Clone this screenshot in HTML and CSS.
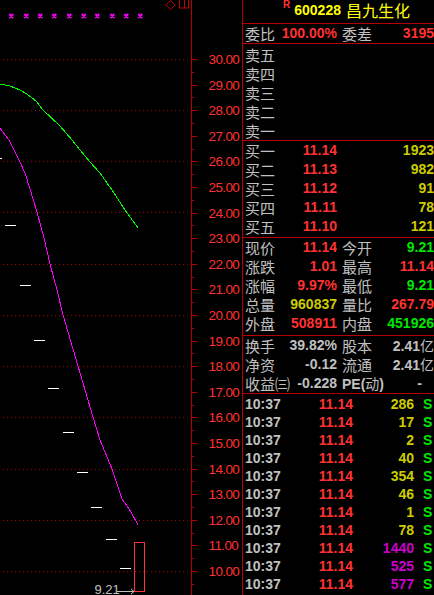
FILE: index.html
```html
<!DOCTYPE html>
<html lang="zh-CN">
<head>
<meta charset="utf-8">
<title>600228 昌九生化</title>
<link rel="stylesheet" href="styles.css">
</head>
<body>
<div class="page">
  <svg class="chart" width="242" height="595" viewBox="0 0 242 595" xmlns="http://www.w3.org/2000/svg">
    <g class="marks">
      <path d="M9.3 14L13.3 18M13.3 14L9.3 18 M24.3 14L28.3 18M28.3 14L24.3 18 M38.3 14L42.3 18M42.3 14L38.3 18 M52.3 14L56.3 18M56.3 14L52.3 18 M67.3 14L71.3 18M71.3 14L67.3 18 M81.7 14L85.7 18M85.7 14L81.7 18 M95.3 14L99.3 18M99.3 14L95.3 18 M110.3 14L114.3 18M114.3 14L110.3 18 M124.3 14L128.3 18M128.3 14L124.3 18 M138.3 14L142.3 18M142.3 14L138.3 18"/>
    </g>
    <polygon class="icon" points="170.5,0.5 175,5 170.5,9.5 166,5"/>
    <rect class="icon" x="179.5" y="-1" width="9" height="9"/>
    <line class="icon" x1="184.5" y1="0" x2="184.5" y2="8"/>
    <path class="grid" d="M3 59.5H191M3 110.5H191M3 161.5H191M3 212.5H191M3 264.5H191M3 315.5H191M3 366.5H191M3 417.5H191M3 469.5H191M3 520.5H191M3 571.5H191"/>
    <line class="axis" x1="191.5" y1="0" x2="191.5" y2="595"/>
    <path class="ticks" d="M191 59.5h6M191 85.5h6M191 110.5h6M191 136.5h6M191 161.5h6M191 187.5h6M191 213.5h6M191 238.5h6M191 264.5h6M191 289.5h6M191 315.5h6M191 341.5h6M191 366.5h6M191 392.5h6M191 417.5h6M191 443.5h6M191 469.5h6M191 494.5h6M191 520.5h6M191 545.5h6M191 571.5h6M191 72.5h3M191 97.5h3M191 123.5h3M191 149.5h3M191 174.5h3M191 200.5h3M191 225.5h3M191 251.5h3M191 277.5h3M191 302.5h3M191 328.5h3M191 353.5h3M191 379.5h3M191 405.5h3M191 430.5h3M191 456.5h3M191 481.5h3M191 507.5h3M191 533.5h3M191 558.5h3M191 584.5h3"/>
    <g class="ax">
      <text x="208.5" y="64">30.00</text>
      <text x="208.5" y="89.6">29.00</text>
      <text x="208.5" y="115.2">28.00</text>
      <text x="208.5" y="140.8">27.00</text>
      <text x="208.5" y="166.4">26.00</text>
      <text x="208.5" y="192">25.00</text>
      <text x="208.5" y="217.6">24.00</text>
      <text x="208.5" y="243.2">23.00</text>
      <text x="208.5" y="268.8">22.00</text>
      <text x="208.5" y="294.4">21.00</text>
      <text x="208.5" y="320">20.00</text>
      <text x="208.5" y="345.6">19.00</text>
      <text x="208.5" y="371.2">18.00</text>
      <text x="208.5" y="396.8">17.00</text>
      <text x="208.5" y="422.4">16.00</text>
      <text x="208.5" y="448">15.00</text>
      <text x="208.5" y="473.6">14.00</text>
      <text x="208.5" y="499.2">13.00</text>
      <text x="208.5" y="524.8">12.00</text>
      <text x="208.5" y="550.4">11.00</text>
      <text x="208.5" y="576">10.00</text>
    </g>
    <path class="dash" d="M0 158.5H2M5 225.5H16M20 285.5H31M34 340.5H45M48 388.5H59M63 432.5H74M77 472.5H88M91 507.5H102M106 539.5H117M120 568.5H131"/>
    <polyline class="green" points="0,84 10,86 20,90 27,94 31,97 37,102 43,110 60,126 72,140 80,150 90,162 100,173 112,190 125,210 138,228"/>
    <polyline class="mag" points="0,128 5,135 9,140 14,150 20,162 25,173 30,189 37,212 44,238 50,264 57,290 63,315 78,366 93,417 100,440 112,469 117,484 122,499 127,506 131,512 138,525"/>
    <rect class="candle" x="134.5" y="542.5" width="10" height="49"/>
    <text class="last" x="94.5" y="594">9.21</text>
    <path class="arrow" d="M117 591.5H134M131 589L134 591.5L131 594"/>
  </svg>

  <div class="panel">
    <div class="hdr">
      <span class="hr">R</span><span class="code">600228</span><span class="name">昌九生化</span>
    </div>

    <div class="sec s1">
      <div class="row">
        <div class="c"><span class="lb">委比</span><span class="n r">100.00%</span></div>
        <div class="c"><span class="lb">委差</span><span class="n r">3195</span></div>
      </div>
    </div>

    <div class="sec s5 sell">
      <div class="row"><div class="c"><span class="lb">卖五</span></div><div class="c"></div></div>
      <div class="row"><div class="c"><span class="lb">卖四</span></div><div class="c"></div></div>
      <div class="row"><div class="c"><span class="lb">卖三</span></div><div class="c"></div></div>
      <div class="row"><div class="c"><span class="lb">卖二</span></div><div class="c"></div></div>
      <div class="row"><div class="c"><span class="lb">卖一</span></div><div class="c"></div></div>
    </div>

    <div class="sec s5">
      <div class="row"><div class="c"><span class="lb">买一</span><span class="n r">11.14</span></div><div class="c end"><span class="n y">1923</span></div></div>
      <div class="row"><div class="c"><span class="lb">买二</span><span class="n r">11.13</span></div><div class="c end"><span class="n y">982</span></div></div>
      <div class="row"><div class="c"><span class="lb">买三</span><span class="n r">11.12</span></div><div class="c end"><span class="n y">91</span></div></div>
      <div class="row"><div class="c"><span class="lb">买四</span><span class="n r">11.11</span></div><div class="c end"><span class="n y">78</span></div></div>
      <div class="row"><div class="c"><span class="lb">买五</span><span class="n r">11.10</span></div><div class="c end"><span class="n y">121</span></div></div>
    </div>

    <div class="sec s5b">
      <div class="row"><div class="c"><span class="lb">现价</span><span class="n r">11.14</span></div><div class="c"><span class="lb">今开</span><span class="n gr">9.21</span></div></div>
      <div class="row"><div class="c"><span class="lb">涨跌</span><span class="n r">1.01</span></div><div class="c"><span class="lb">最高</span><span class="n r">11.14</span></div></div>
      <div class="row"><div class="c"><span class="lb">涨幅</span><span class="n r">9.97%</span></div><div class="c"><span class="lb">最低</span><span class="n gr">9.21</span></div></div>
      <div class="row"><div class="c"><span class="lb">总量</span><span class="n y">960837</span></div><div class="c"><span class="lb">量比</span><span class="n r">267.79</span></div></div>
      <div class="row"><div class="c"><span class="lb">外盘</span><span class="n r">508911</span></div><div class="c"><span class="lb">内盘</span><span class="n gr">451926</span></div></div>
    </div>

    <div class="sec s3">
      <div class="row"><div class="c"><span class="lb">换手</span><span class="n g">39.82%</span></div><div class="c"><span class="lb">股本</span><span class="n g">2.41<span class="cj">亿</span></span></div></div>
      <div class="row"><div class="c"><span class="lb">净资</span><span class="n g">-0.12</span></div><div class="c"><span class="lb">流通</span><span class="n g">2.41<span class="cj">亿</span></span></div></div>
      <div class="row"><div class="c"><span class="lb">收益㈢</span><span class="n g">-0.228</span></div><div class="c"><span class="n g">PE(<span class="cj">动</span>)</span><span class="n g dashv">-</span></div></div>
    </div>

    <div class="trades">
      <div class="tr"><span class="n g">10:37</span><span class="n r tp">11.14</span><span class="n y tv">286</span><span class="n gr ts">S</span></div>
      <div class="tr"><span class="n g">10:37</span><span class="n r tp">11.14</span><span class="n y tv">17</span><span class="n gr ts">S</span></div>
      <div class="tr"><span class="n g">10:37</span><span class="n r tp">11.14</span><span class="n y tv">2</span><span class="n gr ts">S</span></div>
      <div class="tr"><span class="n g">10:37</span><span class="n r tp">11.14</span><span class="n y tv">40</span><span class="n gr ts">S</span></div>
      <div class="tr"><span class="n g">10:37</span><span class="n r tp">11.14</span><span class="n y tv">354</span><span class="n gr ts">S</span></div>
      <div class="tr"><span class="n g">10:37</span><span class="n r tp">11.14</span><span class="n y tv">46</span><span class="n gr ts">S</span></div>
      <div class="tr"><span class="n g">10:37</span><span class="n r tp">11.14</span><span class="n y tv">1</span><span class="n gr ts">S</span></div>
      <div class="tr"><span class="n g">10:37</span><span class="n r tp">11.14</span><span class="n y tv">78</span><span class="n gr ts">S</span></div>
      <div class="tr"><span class="n g">10:37</span><span class="n r tp">11.14</span><span class="n p tv">1440</span><span class="n gr ts">S</span></div>
      <div class="tr"><span class="n g">10:37</span><span class="n r tp">11.14</span><span class="n p tv">525</span><span class="n gr ts">S</span></div>
      <div class="tr"><span class="n g">10:37</span><span class="n r tp">11.14</span><span class="n p tv">577</span><span class="n gr ts">S</span></div>
    </div>
  </div>
</div>
</body>
</html>
```

FILE: styles.css
```css
html, body {
  margin: 0;
  padding: 0;
  background: #000;
  overflow: hidden;
}

.page {
  display: flex;
  width: 434px;
  height: 595px;
  overflow: hidden;
  background: #000;
}

.chart {
  display: block;
  flex: none;
  width: 242px;
  height: 595px;
}

.chart .marks path {
  stroke: #ff00ff;
  stroke-width: 1.8;
  fill: none;
}

.chart .icon {
  fill: none;
  stroke: #c00000;
  stroke-width: 1;
}

.chart .grid {
  fill: none;
  stroke: #a00000;
  stroke-width: 1;
  stroke-dasharray: 1 3;
  shape-rendering: crispEdges;
}

.chart .axis,
.chart .ticks {
  stroke: #b40000;
  stroke-width: 1;
  fill: none;
  shape-rendering: crispEdges;
}

.chart .ax text {
  font-family: "Liberation Sans", Arial, sans-serif;
  font-size: 13.5px;
  letter-spacing: -0.6px;
  fill: #ff3232;
}

.chart .dash {
  stroke: #ffffff;
  stroke-width: 1;
  fill: none;
  shape-rendering: crispEdges;
}

.chart .green {
  fill: none;
  stroke: #00ff00;
  stroke-width: 1;
  shape-rendering: crispEdges;
}

.chart .mag {
  fill: none;
  stroke: #ff00ff;
  stroke-width: 1;
  shape-rendering: crispEdges;
}

.chart .candle {
  fill: none;
  stroke: #ff3232;
  stroke-width: 1;
  shape-rendering: crispEdges;
}

.chart .last {
  font-family: "Liberation Sans", Arial, sans-serif;
  font-size: 13px;
  fill: #c0c0c0;
}

.chart .arrow {
  fill: none;
  stroke: #c0c0c0;
  stroke-width: 1;
}

/* right quote panel */
.panel {
  flex: none;
  width: 191px;
  height: 595px;
  border-left: 1px solid #b40000;
  display: flex;
  flex-direction: column;
  overflow: hidden;
}

.hdr {
  flex: none;
  height: 23px;
  border-bottom: 1px solid #b40000;
  display: flex;
  align-items: flex-start;
  padding-left: 40px;
}

.hr {
  font-family: "Liberation Sans", Arial, sans-serif;
  font-weight: bold;
  font-size: 10px;
  line-height: 10px;
  color: #ff3232;
}

.code {
  font-family: "Liberation Sans", Arial, sans-serif;
  font-weight: bold;
  font-size: 14px;
  line-height: 14px;
  margin-top: 3px;
  margin-left: 4px;
  color: #ffff00;
}

.name {
  font-family: "Noto Sans CJK SC", sans-serif;
  font-size: 16px;
  line-height: 20px;
  margin-left: 5px;
  color: #ffff00;
}

.sec {
  flex: none;
  border-bottom: 1px solid #b40000;
  display: flex;
  flex-direction: column;
}

.s1 { height: 19px; }
.s5 { height: 96px; }
.sell { padding-top: 1px; height: 95px; }
.s5b { height: 97px; }
.s3 { height: 57px; }

.row {
  height: 19px;
  display: grid;
  grid-template-columns: 92px 92px;
  column-gap: 5px;
  padding-left: 2px;
}

.c {
  display: flex;
  justify-content: space-between;
  align-items: center;
  height: 19px;
  overflow: hidden;
  white-space: nowrap;
}

.c.end {
  justify-content: flex-end;
}

.lb {
  font-family: "Noto Sans CJK SC", sans-serif;
  font-size: 15px;
  line-height: 19px;
  color: #c0c0c0;
}

.n {
  font-family: "Liberation Sans", Arial, sans-serif;
  font-weight: bold;
  font-size: 14px;
  line-height: 19px;
  white-space: nowrap;
}

.cj {
  font-family: "Noto Sans CJK SC", sans-serif;
  font-weight: normal;
  font-size: 14px;
}

.dashv {
  padding-right: 12px;
}

.g { color: #c0c0c0; }
.r { color: #ff3232; }
.y { color: #cccc00; }
.gr { color: #00e600; }
.p { color: #cc00cc; }

.trades {
  flex: 1;
  padding-top: 1px;
  display: flex;
  flex-direction: column;
}

.tr {
  height: 18px;
  flex: none;
  display: grid;
  grid-template-columns: 108px 61px 1fr;
  padding-left: 2px;
}

.tr .n {
  line-height: 18px;
}

.tr .n:first-child {
  grid-column: 1;
  grid-row: 1;
}

.tr .tp {
  grid-column: 1;
  grid-row: 1;
  justify-self: end;
}

.tr .tv {
  grid-column: 2;
  grid-row: 1;
  justify-self: end;
}

.tr .ts {
  grid-column: 3;
  grid-row: 1;
  padding-left: 9px;
}
```
